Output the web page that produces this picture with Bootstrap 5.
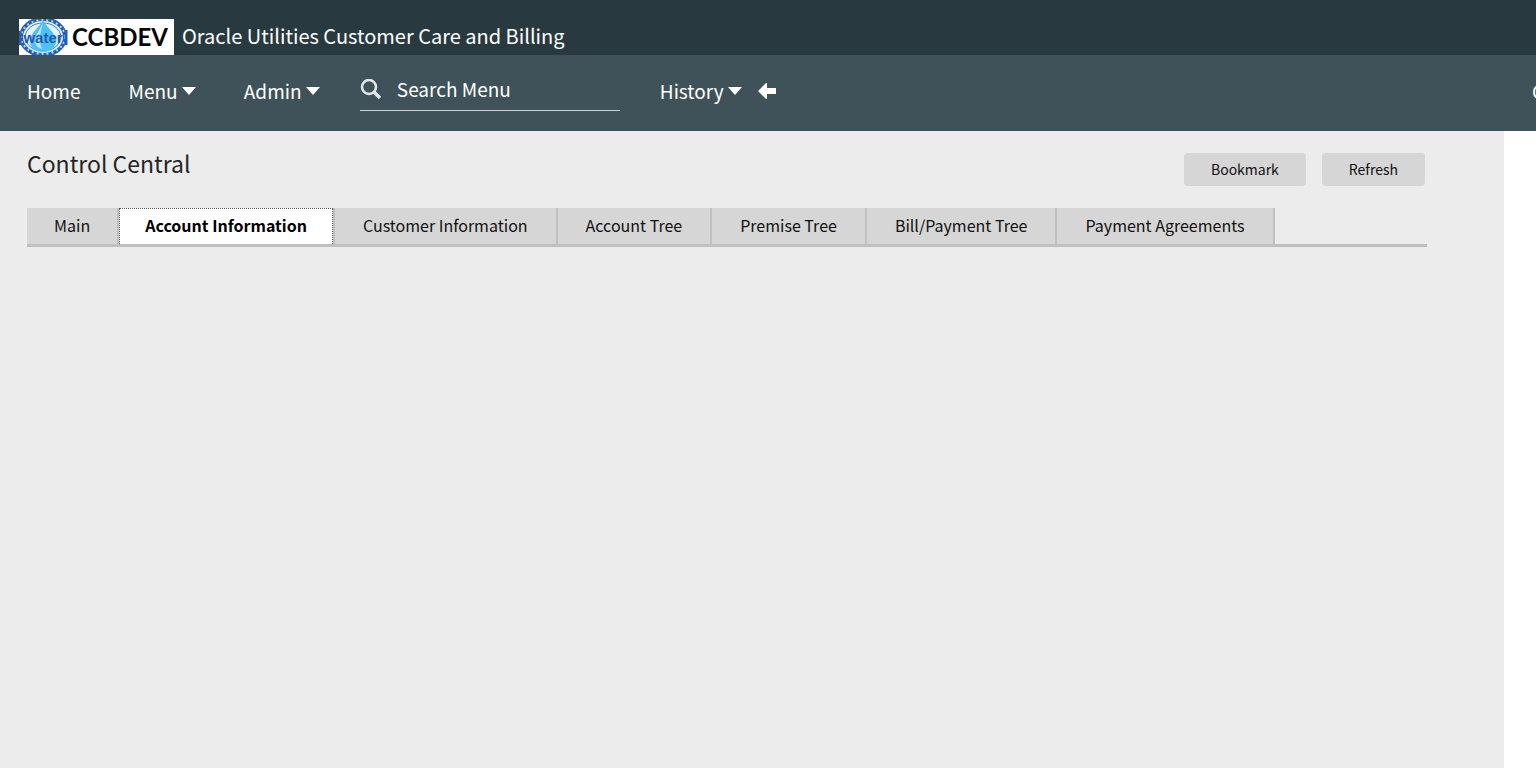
<!DOCTYPE html>
<html lang="en">
<head>
<meta charset="utf-8">
<meta name="viewport" content="width=device-width, initial-scale=1">
<title>Control Central</title>
<link href="https://cdn.jsdelivr.net/npm/bootstrap@5.3.0/dist/css/bootstrap.min.css" rel="stylesheet">
<style>
body { font-family: "Noto Sans CJK SC", "Open Sans", sans-serif; font-size: 18px; line-height: 24px; color: #1c1c1c; background: #fff; }
.brand-bar { background: #293940; height: 55px; padding-left: 19px; }
.brand-name { font-size: 20px; line-height: 38px; color: #fff; }
.brand-logo { height: 36px; width: 155px; }
.menu-bar { background: #3f5259; height: 76px; padding: 0 0 5px 27px; }
.menu-link { color: #fff; font-size: 19px; line-height: 28px; text-decoration: none; background: none; border: 0; padding: 0; white-space: nowrap; }
.menu-link:hover { color: #dfe6e9; }
.gap-menu { gap: 48px; }
.search-box { width: 260px; border-bottom: 1px solid #c9d2d6; height: 41px; margin: 0 40px; padding-top: 5px; }
.search-box input, .search-box input:focus { background: none; border: 0; box-shadow: none; color: #fff; font-size: 19px; line-height: 28px; padding: 0; }
.search-box input::placeholder { color: #fff; opacity: 1; }
.edge-link { width: 4px; }
.page-area { background: #ececec; min-height: calc(100vh - 131px); margin-right: 32px; padding: 18px 77px 0 27px; }
.page-title { font-size: 23px; line-height: 28px; font-weight: 400; color: #252525; }
.act-group { gap: 16px; padding: 4px 2px 0 0; }
.act { background: #d6d6d6; border: 0; border-radius: 4px; font-size: 14px; line-height: 21px; padding: 6px 27px; color: #111; }
.page-tabs { border-bottom: 3px solid #c0c0c0; margin-top: 22px; }
.page-tabs .nav-item { background: #c0c0c0; }
.page-tabs .nav-link { background: #d6d6d6; border: 0; border-right: 2px solid #c0c0c0; border-radius: 0; color: #111; padding: 5px 28px 7px; font-size: 16px; line-height: 24px; }
.page-tabs .nav-item:first-child .nav-link { padding-left: 27px; padding-right: 27px; }
.page-tabs .nav-link.active { background: #fff; color: #000; font-weight: 700; border: 1px dotted #555; border-bottom: 0; padding: 4px 25px 7px; margin-right: 2px; }
</style>
</head>
<body>
<header>
  <div class="brand-bar d-flex align-items-end gap-2">
    <svg class="brand-logo flex-shrink-0" viewBox="0 0 155 36" role="img" aria-label="Water CCBDEV">
      <rect width="155" height="36" fill="#fff"/>
      <ellipse cx="24" cy="18" rx="22" ry="18" fill="#eaf4ff" stroke="#2460b5" stroke-width="4"/>
      <ellipse cx="24" cy="18" rx="22" ry="17" fill="none" stroke="#b9d6f2" stroke-width="2" stroke-dasharray="2 3"/>
      <ellipse cx="24" cy="18" rx="18" ry="14" fill="#e2f1ff" stroke="#3a7fd0" stroke-width="1"/>
      <path d="M24 1C20 9 11 14 11 22c0 7 6 11 13 11s13-4 13-11C37 14 28 9 24 1z" fill="#4dc0f4"/>
      <path d="M24 3c-3 8-8 13-8 19 0 4 3 7 7 8-4-9-1-18 1-27z" fill="#b4e6ff"/>
      <path d="M1 12v14M47 11v15" stroke="#2460b5" stroke-width="3"/>
      <text x="24" y="24" text-anchor="middle" font-family="Liberation Sans" font-weight="700" font-size="15" fill="#1c5cab">water</text>
      <text x="53" y="27" font-family="Lato" font-weight="700" font-size="24" fill="#080808">CCBDEV</text>
    </svg>
    <div class="brand-name">Oracle Utilities Customer Care and Billing</div>
  </div>
  <nav class="menu-bar d-flex align-items-center overflow-hidden" aria-label="Main">
    <div class="d-flex gap-menu">
      <a class="menu-link" href="#">Home</a>
      <button class="menu-link" type="button">Menu <svg width="14" height="8" viewBox="0 0 14 8" class="mb-1"><path d="M0 0h14L7 8z" fill="#fff"/></svg></button>
      <button class="menu-link" type="button">Admin <svg width="14" height="8" viewBox="0 0 14 8" class="mb-1"><path d="M0 0h14L7 8z" fill="#fff"/></svg></button>
    </div>
    <div class="search-box d-flex align-items-start">
      <label for="menuSearch" class="flex-shrink-0 pe-3 d-flex pt-1"><svg width="21" height="21" viewBox="0 0 21 21" role="img" aria-label="Search"><circle cx="9" cy="8" r="7" fill="none" stroke="#e4e8ea" stroke-width="2.500"/><path d="M14 13l6 6" stroke="#e4e8ea" stroke-width="3.500"/></svg></label>
      <input id="menuSearch" class="form-control" type="text" placeholder="Search Menu">
    </div>
    <button class="menu-link" type="button">History <svg width="14" height="8" viewBox="0 0 14 8" class="mb-1"><path d="M0 0h14L7 8z" fill="#fff"/></svg></button>
    <button class="menu-link ms-3 d-flex" type="button" aria-label="Back"><svg width="18" height="16" viewBox="0 0 18 16"><path d="M0 8L8 0h1v5h9v6H9v5H8z" fill="#fff"/></svg></button>
    <a class="menu-link edge-link ms-auto" href="#">C</a>
  </nav>
</header>
<main class="page-area">
  <div class="d-flex justify-content-between align-items-start">
    <h1 class="page-title mb-0">Control Central</h1>
    <div class="act-group d-flex">
      <button class="act" type="button">Bookmark</button>
      <button class="act" type="button">Refresh</button>
    </div>
  </div>
  <ul class="nav page-tabs">
    <li class="nav-item"><a class="nav-link" href="#">Main</a></li>
    <li class="nav-item"><a class="nav-link active" href="#" aria-current="page">Account Information</a></li>
    <li class="nav-item"><a class="nav-link" href="#">Customer Information</a></li>
    <li class="nav-item"><a class="nav-link" href="#">Account Tree</a></li>
    <li class="nav-item"><a class="nav-link" href="#">Premise Tree</a></li>
    <li class="nav-item"><a class="nav-link" href="#">Bill/Payment Tree</a></li>
    <li class="nav-item"><a class="nav-link" href="#">Payment Agreements</a></li>
  </ul>
</main>
<script src="https://cdn.jsdelivr.net/npm/bootstrap@5.3.0/dist/js/bootstrap.bundle.min.js"></script>
</body>
</html>
